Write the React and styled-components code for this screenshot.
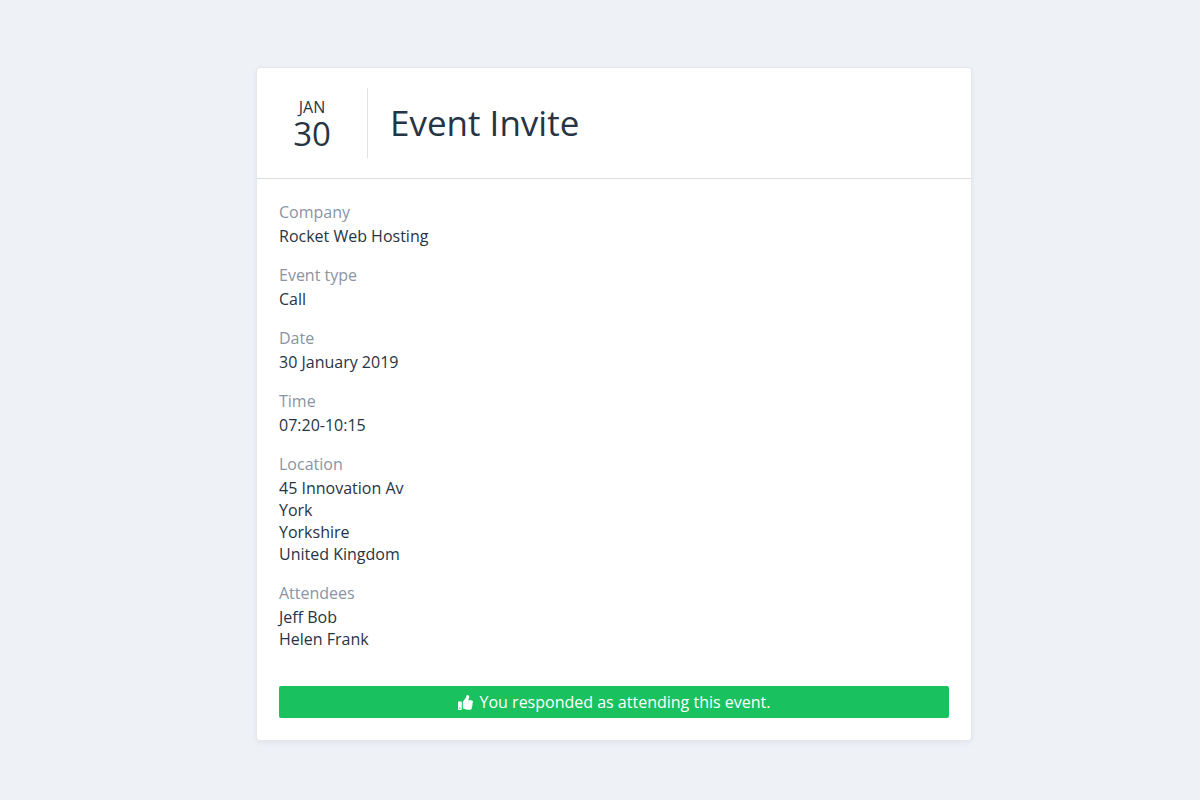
import React from 'react'
import styled, { createGlobalStyle } from 'styled-components'

const GlobalStyle = createGlobalStyle`
* {
  box-sizing: border-box;
}

body {
  margin: 0;
  background-color: #eef1f6;
  color: #273444;
  font-family: "Open Sans", "Noto Sans", sans-serif;
  font-size: 16px;
  line-height: 22px;
}
`

const Page = styled.main`
padding: 68px 0 59px 28px;
`

const Card = styled.article`
width: 100%;
max-width: 714px;
margin: 0 auto;
background-color: white;
border-radius: 3px;
box-shadow: 0 0 0 1px #e4e7ed, 0 2px 6px 0 rgba(39, 52, 68, 0.08);
`

const CardHeader = styled.header`
display: flex;
padding: 20px 0;
border-bottom: 1px solid #dbdfe4;
`

const DateBadge = styled.time`
display: flex;
flex-direction: column;
justify-content: center;
align-items: center;
width: 111px;
min-height: 70px;
padding-top: 4px;
border-right: 1px solid #dfe2e7;
`

const Month = styled.span`
line-height: 18px;
`

const Day = styled.span`
font-size: 33px;
line-height: 36px;
`

const Title = styled.h1`
margin: 0;
padding: 0 22px;
align-self: center;
font-size: 35px;
font-weight: 500;
line-height: 44px;
`

const CardBody = styled.div`
padding: 22px;
`

const Details = styled.dl`
display: flex;
flex-direction: column;
gap: 17px;
margin: 0 0 36px;
`

const Label = styled.dt`
margin-bottom: 2px;
color: #8a94a3;
`

const Value = styled.dd`
margin: 0;
font-weight: 500;
`

const Response = styled.div`
display: flex;
justify-content: center;
align-items: center;
gap: 7px;
min-height: 32px;
padding: 5px 10px;
border-radius: 2px;
background-color: #19c15f;
color: white;
font-weight: 500;
`

const ThumbIcon = styled.svg`
width: 15px;
height: 15px;
fill: currentColor;
`

const details = [
    { label: 'Company', values: ['Rocket Web Hosting'] },
    { label: 'Event type', values: ['Call'] },
    { label: 'Date', values: ['30 January 2019'] },
    { label: 'Time', values: ['07:20-10:15'] },
    { label: 'Location', values: ['45 Innovation Av', 'York', 'Yorkshire', 'United Kingdom'] },
    { label: 'Attendees', values: ['Jeff Bob', 'Helen Frank'] },
]

function ThumbsUp() {
    return (
        <ThumbIcon viewBox="0 0 512 512" aria-hidden="true">
            <path d="M104 224H24c-13 0-24 11-24 24v240c0 13 11 24 24 24h80c13 0 24-11 24-24V248c0-13-11-24-24-24zM64 472a24 24 0 1 1 0-48 24 24 0 0 1 0 48zM384 81c0 43-26 67-33 94h101c33 0 60 28 60 58 0 18-8 37-19 49 10 23 8 56-9 79 8 25 0 56-16 72 4 17 2 32-6 44-20 29-70 29-112 29h-3c-48 0-87-17-118-31-16-7-36-16-52-16-6 0-12-5-12-12V233c0-3 1-6 4-8 39-39 56-80 88-113 15-15 20-37 25-58C286 36 295 0 316 0c24 0 68 8 68 81z" />
        </ThumbIcon>
    )
}

export default function App() {
    return (
        <>
        <GlobalStyle/>
        <Page>
            <Card>
                <CardHeader>
                    <DateBadge dateTime="2019-01-30">
                        <Month>JAN</Month>
                        <Day>30</Day>
                    </DateBadge>
                    <Title>Event Invite</Title>
                </CardHeader>
                <CardBody>
                    <Details>
                        {details.map(({ label, values }) => (
                            <div key={label}>
                                <Label>{label}</Label>
                                {values.map(value => <Value key={value}>{value}</Value>)}
                            </div>
                        ))}
                    </Details>
                    <Response role="status">
                        <ThumbsUp/>
                        <span>You responded as attending this event.</span>
                    </Response>
                </CardBody>
            </Card>
        </Page>
        </>
    )
}
